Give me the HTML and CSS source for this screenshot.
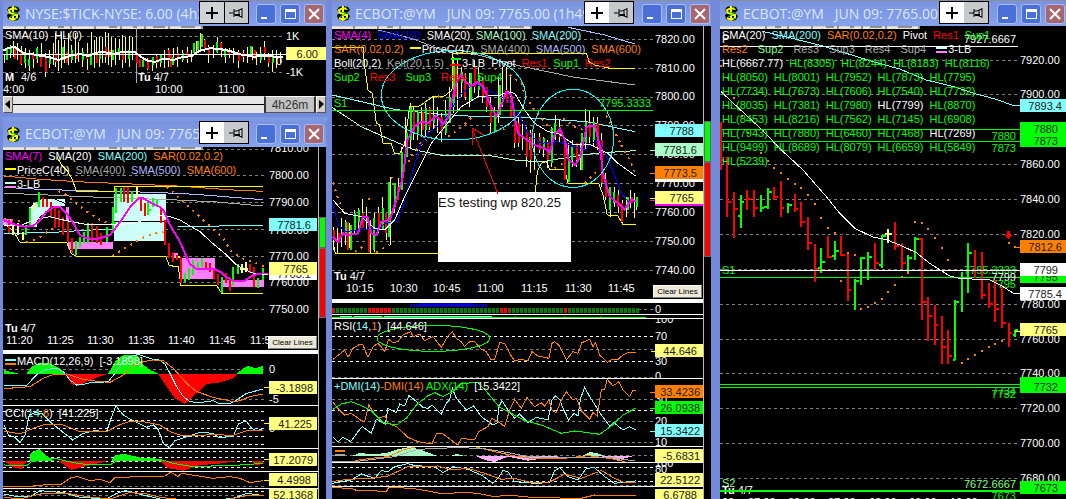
FILE: index.html
```html
<!DOCTYPE html>
<html lang="en">
<head>
    <meta charset="UTF-8">
    <meta name="viewport" content="width=device-width, initial-scale=1.0">
    <title>Trading Workspace</title>
    <link rel="stylesheet" href="styles.css">
</head>
<body>
    <!-- shared icons -->
    <svg class="defs" width="0" height="0">
        <symbol id="logo" viewBox="0 0 15 17">
            <path d="M7 1l5 1 2 3-3 3 3 3-2 4-5 1-5-2-1-4 3-2-3-3 2-3z" fill="#000"/>
            <path d="M11 4L7 3 3 5l1 3 7 2v3l-4 2-4-2M7 1v14" fill="none" stroke="#ff0" stroke-width="2"/>
            <path d="M9 2l3 3M5 7l6 1M4 12l5-3M9 14l3-1" fill="none" stroke="#0c0"/>
        </symbol>
        <symbol id="cross" viewBox="0 0 16 16">
            <path d="M2 8h5M9 8h5M8 2v5M8 9v5M7 8h2" stroke="#000" stroke-width="2"/>
        </symbol>
        <symbol id="pin" viewBox="0 0 16 16">
            <path d="M1 8h5M6 4v8M6 6h3l2-1v6l-2-1H6M14 3v10M11 5l3-1M11 11l3 1" fill="none" stroke="#000"/>
            <path d="M7 9h5v2H7z" fill="#000"/>
        </symbol>
        <symbol id="min" viewBox="0 0 16 16"><path d="M3 11h6v2H3z" fill="#fff"/></symbol>
        <symbol id="max" viewBox="0 0 16 16"><path d="M3 3h11v10H3zM4 6v6h9V6z" fill="#fff" fill-rule="evenodd"/></symbol>
        <symbol id="close" viewBox="0 0 16 16"><path d="M3 3l10 10M13 3L3 13" stroke="#fff" stroke-width="2"/></symbol>
        <symbol id="strip" viewBox="0 0 200 3">
            <path d="M0 0h200v3H0z" fill="#d4d0c8"/>
            <path d="M0 2h200" stroke="#fff"/>
            <path d="M22 0v3M46 0v3M68 0v3M92 0v3M118 0v3M142 0v3M166 0v3M199 0v3M55 1h6M106 1h8M130 1h4M150 1h12M178 1h14" stroke="#444"/>
        </symbol>
    </svg>

    <div class="desktop">
        <div class="column">
            <!-- $TICK -->
            <section class="window tick">
                <header class="titlebar">
                    <svg class="logo"><use href="#logo"/></svg>
                    <h2>NYSE:$TICK-NYSE: 6.00 (4h26m)</h2>
                    <div class="tools">
                        <button type="button" class="pressed" aria-label="Pointer"><svg><use href="#cross"/></svg></button>
                        <button type="button" aria-label="Pin"><svg><use href="#pin"/></svg></button>
                    </div>
                    <button type="button" class="winbtn" aria-label="Minimize"><svg><use href="#min"/></svg></button>
                    <button type="button" class="winbtn" aria-label="Maximize"><svg><use href="#max"/></svg></button>
                    <button type="button" class="winbtn close" aria-label="Close"><svg><use href="#close"/></svg></button>
                </header>
                <div class="chart">
                    <svg viewBox="3 26 323 70">
                        <use href="#strip" x="3" y="26" width="200" height="3"/>
                        <path class="grid" d="M3 36H284M3 72H284"/>
                        <path class="line grey" d="M136 28V83"/>
                        <g class="plot" transform="scale(.3333)">
                            <path class="line pale" d="M15 165V190M22 140V175M31 135V175M40 122V170M52 128V180M64 138V195M76 145V205M88 150V212M100 155V205M112 140V190M124 130V200M136 160V232M148 150V205M160 130V195M168 100V200M176 120V212M184 95V205M194 120V190M206 98V195M216 135V190M226 100V190M236 125V185M248 145V200M262 128V210M274 95V180M284 120V205M290 112V190M298 110V200M308 112V190M318 95V190M327 100V195M336 110V200M348 115V195M358 118V180M368 105V205M378 110V190M388 108V200M397 112V180M412 158V190M430 170V200M444 175V210M458 170V212M470 165V205M482 165V200M494 150V205M506 145V200M520 145V195M534 140V200M548 150V185M562 140V190M576 150V185M590 122V160M602 100V155M614 118V155M626 135V190M640 135V175M652 112V160M664 125V170M676 145V190M688 145V175M700 145V190M716 150V205M730 150V185M744 140V190M758 140V180M770 155V195M782 140V190M794 123V180M806 160V200M818 150V215M830 150V205M842 155V190"/>
                            <path class="bar up" d="M20 145V180M34 138V160M76 160V190M88 178V198M112 145V178M150 168V192M188 140V180M216 150V180M248 155V180M274 160V195M300 155V178M340 150V180M358 145V162M388 150V178M430 180V202M458 172V195M482 166V188M520 172V195M548 158V180M582 130V160M594 122V150M606 102V140M652 126V155M676 150V172M752 138V170M782 158V180M818 165V190"/>
                            <path class="bar down" d="M46 145V178M64 152V192M100 165V178M124 165V202M138 172V215M168 160V185M200 155V190M230 158V176M262 160V178M290 165V188M318 142V172M330 150V170M370 155V180M412 165V188M420 178V202M444 178V206M470 168V190M506 150V182M514 165V202M534 158V172M562 155V178M614 120V150M626 140V165M664 128V150M688 150V165M716 155V182M730 160V172M764 150V176M794 140V160M806 165V188"/>
                            <path class="line white thick" d="M10 152L25 143 45 142 60 152 75 162 95 162 125 168 150 172 175 180 195 173 215 166 240 162 265 168 290 158 310 156 340 162 370 155 405 157 425 172 445 183 465 186 490 176 520 180 545 172 575 168 600 152 630 145 660 147 690 153 720 163 760 170 800 168 850 172"/>
                        </g>
                        <path class="line white" d="M3 54H286"/>
                        <rect class="f-yellow" x="286" y="47" width="40" height="13"/>
                        <text class="tag" x="318" y="58">6.00</text>
                        <text x="286" y="40">1K</text>
                        <text x="286" y="76">-1K</text>
                        <text x="276" y="65">0</text>
                        <text x="5" y="81"><tspan class="strong">M</tspan></text>
                        <text x="21" y="81">4/6</text>
                        <text x="138" y="81"><tspan class="strong">Tu</tspan> 4/7</text>
                        <text x="3" y="93">4:00</text>
                        <text x="61" y="93">15:00</text>
                        <text x="155" y="93">10:00</text>
                        <text x="218" y="93">11:00</text>
                    </svg>
                    <div class="legend">
                        <p><span>SMA(10)</span><span>HL(0)</span></p>
                    </div>
                </div>
                <div class="scrollbar">
                    <button type="button" aria-label="Scroll left"><svg viewBox="0 0 8 15"><path d="M6 3v9L1 7z"/></svg></button>
                    <div class="track"></div>
                    <button type="button" class="thumb">4h26m</button>
                    <button type="button" aria-label="Scroll right"><svg viewBox="0 0 8 15"><path d="M2 3v9l5-5z"/></svg></button>
                </div>
            </section>

            <!-- YM, 1 minute -->
            <section class="window ym1">
                <header class="titlebar">
                    <svg class="logo"><use href="#logo"/></svg>
                    <h2>ECBOT:@YM &nbsp; JUN 09: 7765.00</h2>
                    <div class="tools">
                        <button type="button" class="pressed" aria-label="Pointer"><svg><use href="#cross"/></svg></button>
                        <button type="button" aria-label="Pin"><svg><use href="#pin"/></svg></button>
                    </div>
                    <button type="button" class="winbtn" aria-label="Minimize"><svg><use href="#min"/></svg></button>
                    <button type="button" class="winbtn" aria-label="Maximize"><svg><use href="#max"/></svg></button>
                    <button type="button" class="winbtn close" aria-label="Close"><svg><use href="#close"/></svg></button>
                </header>
                <div class="content">
                    <div class="panels">
                        <div class="chart main">
                            <svg viewBox="3 147 315 203">
                                <path class="grid" d="M3 149H264M3 175H264M3 202H264M3 229H264M3 256H264M3 282H264M3 309H264"/>
                                <text x="269" y="152">7810.00</text>
                                <use href="#strip" x="3" y="147" width="200" height="3"/>
                                <g class="plot" transform="translate(0 120) scale(.3333)">
                                    <path class="f-ice" d="M88 320V262L125 237H195V258H155L110 300V322zM342 222H497V363H342z"/>
                                    <path class="f-pink" d="M10 298H35V315H10zM205 366H338V387H205zM520 399H534V414H520zM543 414H645V477H543zM665 480H792V501H665zM198 262H206V300H198z"/>
                                    <path class="line black" d="M165 238L195 250M342 304H497"/>
                                    <path class="line orange" d="M12 168L120 178 250 186 420 193 530 198 600 203 700 210 788 214"/>
                                    <path class="line lilac" d="M12 202L120 208 250 212 420 216 530 220 600 224 700 232 788 239"/>
                                    <path class="line grey" d="M12 220L100 223 250 230 420 236 530 240 650 246 788 258"/>
                                    <path class="line yellow" d="M170 110L185 135 200 150 215 175 230 214H345V200H788"/>
                                    <path class="line yellow" d="M12 310L40 333 60 367H200L215 402 230 409H497L508 437 535 440 543 496H650L665 520H790"/>
                                    <path class="line cyan" d="M12 340L150 338 250 331 342 328M535 320L788 316"/>
                                    <path class="dots" d="M12 297L70 306M175 213L200 225 250 268 300 300 335 312M80 367L115 355 150 330 168 322M337 408L400 370 440 347 490 335M500 200L550 245 610 300 670 355 690 390 720 412 770 430 792 440"/>
                                    <path class="line pale bold" d="M38 315V345M53 310V345M68 335V360M103 250V270M410 202V245M725 432V458M738 425V455M720 448H745M525 412H540"/>
                                    <path class="bar up" d="M77 315V345M90 265V322M117 215V262M228 362V405M240 350V380M252 335V370M265 310V368M320 320V365M340 262V340M347 205V280M362 205V245M395 212V245M445 245V285M460 235V262M470 240V260M555 460V486M567 445V480M580 420V465M595 425V445M607 415V440M665 470V520M700 440V495M713 432V462M775 475V505M790 445V480M110 250H117M335 310H347M440 270H452"/>
                                    <path class="bar down" d="M28 300V340M130 232V262M142 238V262M152 245V295M165 265V325M178 270V322M190 290V345M203 300V365M215 355V398M277 310V365M290 318V368M302 340V375M372 200V245M385 200V248M422 235V272M435 250V288M484 262V310M495 300V375M508 370V415M520 395V425M530 405V420M543 412V490M618 425V448M630 430V455M643 448V478M655 462V495M678 460V490M690 470V512M750 432V460M762 440V500"/>
                                    <path class="line white" d="M12 315L60 318 100 300 150 290 190 300 250 312 340 315 400 310 450 295 480 285 510 290 540 300 570 318 600 335 640 372 680 405 710 435 740 452 770 463 805 463"/>
                                    <path class="line magenta thick" d="M10 300L30 308 50 315 75 320 100 318 120 300 140 275 160 262 180 262 200 280 220 310 240 345 260 355 290 357 310 352 330 345 350 320 375 285 395 255 415 235 430 235 455 250 475 258 490 270 510 315 540 365 555 400 570 432 590 447 645 448 665 458 680 472 700 482 735 482 760 465 790 460"/>
                                </g>
                                <text x="269" y="179">7800.00</text>
                                <text x="269" y="206">7790.00</text>
                                <text x="269" y="234">7780.00</text>
                                <text x="269" y="260">7770.00</text>
                                <text x="269" y="286">7760.00</text>
                                <text x="269" y="313">7750.00</text>
                                <path class="line magenta" d="M263 273H269"/>
                                <rect class="f-white" x="269" y="267" width="48" height="13"/>
                                <text class="tag" x="311" y="278">7763.1</text>
                                <rect class="f-cyan" x="269" y="218" width="48" height="13"/>
                                <text class="tag" x="311" y="229">7781.6</text>
                                <rect class="f-yellow" x="269" y="262" width="48" height="13"/>
                                <text class="tag" x="308" y="273">7765</text>
                                <text x="5" y="332"><tspan class="strong">Tu</tspan> 4/7</text>
                                <text x="6" y="344">11:20</text>
                                <text x="47" y="344">11:25</text>
                                <text x="87" y="344">11:30</text>
                                <text x="128" y="344">11:35</text>
                                <text x="168" y="344">11:40</text>
                                <text x="209" y="344">11:45</text>
                                <text x="250" y="344">11:50</text>
                            </svg>
                            <div class="legend">
                                <p><span class="magenta">SMA(7)</span><span>SMA(20)</span><span class="cyan">SMA(200)</span><span class="orange">SAR(0.02,0.2)</span></p>
                                <p><span><i class="key k-yellow"></i>PriceC(40)</span><span class="grey">SMA(400)</span><span class="lilac">SMA(500)</span><span class="orange">SMA(600)</span></p>
                                <p><span><i class="key k-lb"></i>3-LB</span></p>
                            </div>
                            <button type="button" class="clear">Clear Lines</button>
                        </div>
                        <div class="chart">
                            <svg viewBox="3 354 315 51">
                                <path class="grid" d="M3 369H264M3 399H264"/>
                                <g class="plot" transform="translate(0 350) scale(.3333)">
                                    <path class="f-up" d="M12 71V60L30 65 55 71zM80 71L95 50 120 38 150 40 180 55 195 71zM325 71L345 35 370 15 410 14 430 45 455 62 475 71zM710 71L730 55 745 48 765 55 790 47V71z"/>
                                    <path class="f-down" d="M195 71L215 102 235 108 260 95 290 83 325 71zM475 71L500 110 525 145 555 162 590 130 620 102 660 97 700 85 715 71z"/>
                                    <path class="line cyan" d="M12 108L80 107 95 90 115 70 140 58 170 55 190 65 210 90 230 105 250 103 270 98 300 97 325 95 345 70 365 40 390 20 415 13 435 20 455 27 475 28 495 42 510 70 530 110 550 140 570 155 600 158 640 152 660 162 690 160 710 150 740 130 790 117"/>
                                    <path class="line orange" d="M12 116L90 110 130 85 160 73 200 72 250 88 300 95 330 97 370 75 400 48 430 35 460 30 490 32 520 55 560 100 590 125 640 142 700 155 720 152 750 140 790 132"/>
                                    <path class="line yellow" d="M792 114H806"/>
                                </g>
                                <text x="269" y="373">0</text>
                                <text x="269" y="403">-5</text>
                                <rect class="f-yellow" x="269" y="381" width="48" height="13"/>
                                <text class="tag" x="313" y="392">-3.1898</text>
                            </svg>
                            <div class="legend tight"><p><span><i class="key k-macd"></i>MACD(12,26,9)</span><span>[-3.1898]</span></p></div>
                        </div>
                        <div class="chart">
                            <svg viewBox="3 406 315 42">
                                <path class="grid g-white" d="M3 411H264M3 420H264M3 428H264M3 436H264M3 444H264"/>
                                <g class="plot" transform="translate(0 350) scale(.3333)">
                                    <path class="line cyan" d="M12 225L25 255 45 262 60 278 75 255 88 195 105 188 125 190 150 215 180 240 200 255 218 270 250 250 285 242 320 245 335 200 348 168 370 195 395 210 440 232 460 225 475 240 490 280 508 293 525 272 560 260 600 247 640 250 655 262 700 260 715 222 738 213 755 235 770 243 790 235"/>
                                    <path class="line orange" d="M12 243L60 252 100 235 130 225 190 225 240 245 320 246 350 228 390 214 430 215 480 225 510 245 550 258 640 254 700 256 740 242 790 240"/>
                                    <path class="line yellow" d="M792 221H806"/>
                                </g>
                                <text x="269" y="432">0</text>
                                <rect class="f-yellow" x="269" y="417" width="48" height="13"/>
                                <text class="tag" x="312" y="428">41.225</text>
                            </svg>
                            <div class="legend tight"><p><span>CCI(<b class="cyan">14</b>,<b class="orange">6</b>)</span><span>[41.225]</span></p></div>
                        </div>
                        <div class="chart">
                            <svg viewBox="3 449 315 22">
                                <path class="grid g-white" d="M3 451H264M3 457H264M3 461H264M3 467H264"/>
                                <g class="plot" transform="translate(0 350) scale(.3333)">
                                    <path class="f-down" d="M12 333H80L65 357 40 352zM175 333L215 360 260 348 325 333zM480 333L505 355 550 362 600 345 650 342 715 333zM755 333L765 345 785 343 790 333z"/>
                                    <path class="f-up" d="M88 333L92 310 118 297 140 318 165 333zM335 333L345 315 375 312 430 325 480 328 490 333z"/>
                                    <path class="line green" d="M12 345L80 347 95 335 165 325 220 338 270 345 330 345 350 333 430 325 480 328 520 340 580 350 720 345 790 340"/>
                                    <path class="line yellow" d="M792 330H806"/>
                                </g>
                                <rect class="f-yellow" x="269" y="453" width="48" height="13"/>
                                <text class="tag" x="313" y="464">17.2079</text>
                            </svg>
                        </div>
                        <div class="chart">
                            <svg viewBox="3 472 315 16">
                                <path class="grid" d="M3 486H264"/>
                                <g class="plot" transform="translate(0 350) scale(.3333)">
                                    <path class="line orange" d="M12 410L80 410 130 405 180 405 215 382 235 380 270 392 300 388 330 398 345 382 440 380 495 378 510 368 520 370 533 380 545 370 640 385 690 380 720 385 750 398 790 392"/>
                                    <path class="line yellow" d="M792 392H806"/>
                                </g>
                                <rect class="f-yellow" x="269" y="473" width="48" height="13"/>
                                <text class="tag" x="311" y="484">4.4998</text>
                            </svg>
                        </div>
                        <div class="chart">
                            <svg viewBox="3 489 315 16">
                                <path class="grid g-white" d="M3 491H264"/>
                                <path class="grid" d="M3 495H264"/>
                                <g class="plot" transform="translate(0 350) scale(.3333)">
                                    <path class="line cyan" d="M12 432L50 440 90 440 120 422 190 428 240 442 320 447 350 430 375 422 430 435 480 447 600 455 700 445 740 430 790 437"/>
                                    <path class="line orange" d="M12 442L60 447 130 430 200 430 260 440 330 447 390 427 440 432 480 442 600 455 690 447 740 437 790 437"/>
                                </g>
                                <rect class="f-yellow" x="269" y="489" width="48" height="13"/>
                                <text class="tag" x="313" y="499">52.1368</text>
                            </svg>
                        </div>
                    </div>
                    <div class="meter"><div class="gain"></div><div class="loss"></div></div>
                </div>
            </section>
        </div>

        <!-- YM, 3 minute -->
        <section class="window ym3">
            <header class="titlebar">
                <svg class="logo"><use href="#logo"/></svg>
                <h2>ECBOT:@YM &nbsp; JUN 09: 7765.00 (1h49m left)</h2>
                <div class="tools">
                    <button type="button" class="pressed" aria-label="Pointer"><svg><use href="#cross"/></svg></button>
                    <button type="button" aria-label="Pin"><svg><use href="#pin"/></svg></button>
                </div>
                <button type="button" class="winbtn" aria-label="Minimize"><svg><use href="#min"/></svg></button>
                <button type="button" class="winbtn" aria-label="Maximize"><svg><use href="#max"/></svg></button>
                <button type="button" class="winbtn close" aria-label="Close"><svg><use href="#close"/></svg></button>
            </header>
            <div class="content">
                <div class="panels">
                    <div class="chart main">
                        <svg viewBox="332 26 371 273">
                            <use href="#strip" x="332" y="26" width="200" height="3"/>
                            <path class="grid" d="M332 39H653M332 68H653M332 97H653M332 125H653M332 154H653M332 183H653M332 212H653M332 241H653M332 270H653"/>
                            <g class="plot" transform="translate(328 0) scale(.3333)">
                                <path class="line grey" d="M150 90L260 118 340 150 450 165 576 198 740 232 921 255"/>
                                <path class="line lilac" d="M721 82L830 105 921 132"/>
                                <path class="line yellow" d="M12 142H105L110 200 120 270 133 280 145 370 155 375 165 430 190 432 200 462H215L230 430 245 320 275 318 300 300 315 290 350 288 372 270 375 160H776L783 185 800 195 846 205H921"/>
                                <path class="line yellow" d="M18 740L22 760H330M622 575L628 515 640 490 655 485 665 508H710L720 550H812L825 585 838 645 870 648 885 673H923"/>
                                <path class="line cyan" d="M12 285L100 305 200 328 300 340 450 350 576 352 776 365 921 395"/>
                                <path class="line mint" d="M12 322L100 380 190 420 260 450 340 466H480L560 480 640 486 720 472 800 460 923 452"/>
                                <path class="dots" d="M15 548L30 595 45 630M80 755L112 735M145 757L185 735M190 530L205 590M120 595L135 605M225 500L245 480 265 450 295 420M275 432L300 400 320 380M330 288L348 302M360 410L390 390 440 345M500 205L515 215M545 225L580 250 590 285 620 330 650 365 670 390M705 355L740 380 765 390M825 328L850 375 880 435M525 390L545 370M680 505L705 490M770 550L815 505M880 435L905 480 923 520"/>
                                <path class="line pale" d="M18 680V750M30 685V760M42 655V740M54 660V735M66 670V745M80 630V700M92 625V690M104 598V660M116 620V690M128 660V760M140 640V755M152 620V700M164 590V690M176 650V720M188 530V735M200 550V640M212 535V600M222 440V560M234 350V470M248 310V445M258 320V420M270 330V420M282 320V410M294 310V410M306 320V390M318 290V390M330 320V400M342 340V425M354 300V405M366 260V370M378 170V340M390 180V330M402 200V290M414 220V300M426 220V320M440 180V280M452 200V290M464 230V310M476 260V335M488 290V400M500 320V395M512 230V370M525 200V320M537 200V300M549 230V350M561 330V445M573 350V440M585 360V450M597 380V500M609 390V520M621 400V510M635 400V460M647 410V470M659 420V505M670 380V500M682 345V420M696 360V430M710 410V540M722 430V520M734 420V500M746 430V500M758 430V510M773 327V450M785 330V430M797 350V440M809 350V450M820 400V560M833 520V600M847 560V650M859 560V620M871 570V640M883 600V670M895 590V650M907 570V625M919 580V655M927 590V630"/>
                                <path class="bar up" d="M54 665V700M68 675V750M80 640V690M92 630V665M138 655V750M164 625V690M182 545V710M200 550V620M222 455V570M238 400V470M248 320V420M270 335V400M294 325V390M318 345V370M354 340V400M366 290V370M378 190V320M402 215V250M428 220V300M452 225V270M500 345V395M515 255V345M605 410V450M647 415V450M672 385V490M682 370V410M722 480V545M732 440V480M762 400V510M773 365V430M797 365V420M847 560V630M859 575V610M899 590V630M927 590V620"/>
                                <path class="bar down" d="M18 690V720M32 700V730M60 665V750M105 640V685M123 690V755M152 640V690M174 640V700M210 560V600M258 330V395M284 335V390M306 325V380M342 350V395M385 200V290M412 240V290M440 200V260M464 240V290M476 260V320M490 320V370M537 270V310M549 290V350M561 350V430M573 370V430M597 390V470M609 400V480M635 410V450M659 430V480M696 380V410M710 430V540M746 430V480M785 370V410M809 370V440M822 420V550M833 540V590M871 585V620M883 610V665M911 590V610"/>
                                <path class="line blue" d="M12 610L30 670 50 695 90 690 150 690 170 670 205 665 225 620 250 530 275 440 300 400 340 370 360 345 400 280 440 250 480 270 540 300 570 340 600 400 640 430 690 425 740 440 770 450 800 425 815 425 850 500 880 580 905 610"/>
                                <path class="line white" d="M15 600L50 640 100 650 140 685 170 690 200 660 230 590 270 510 310 430 350 380 400 320 450 290 520 285 540 275 560 280 590 330 620 370 660 395 690 400 740 435 790 435 840 460 870 490 923 528"/>
                                <path class="line magenta thick" d="M15 710L30 725 45 700 60 705 90 700 105 650 118 650 130 700 145 705 160 665 185 660 205 600 225 530 238 420 260 380 280 365 300 370 325 347 345 372 360 355 370 310 385 250 398 225 412 245 430 258 450 245 468 265 485 310 505 350 520 315 535 275 550 285 560 350 570 400 590 415 620 435 650 445 665 458 681 400 696 388 711 420 722 480 742 495 757 470 776 380 801 378 816 440 825 520 845 590 870 610 890 628 910 600 925 603"/>
                                <path class="line green thick" d="M368 176H398"/>
                                <path class="line red thick" d="M366 194H398"/>
                                <ellipse class="line aqua" cx="376" cy="286" rx="216" ry="134"/>
                                <ellipse class="line aqua" cx="735" cy="415" rx="122" ry="147"/>
                                <path class="line green" d="M12 331H976"/>
                            </g>
                            <rect class="f-white" x="438" y="192" width="133" height="70"/>
                            <text class="note" x="438" y="207">ES testing wp 820.25</text>
                            <path class="line red" d="M498 194L472 128V145M472 128L484 135"/>
                            <text class="green" x="334" y="107">S1</text>
                            <text class="green end" x="651" y="107">7795.3333</text>
                            <text x="655" y="43">7820.00</text>
                            <text x="655" y="72">7810.00</text>
                            <text x="655" y="100">7800.00</text>
                            <text x="655" y="129">7790.00</text>
                            <text x="655" y="158">7780.00</text>
                            <text x="655" y="187">7770.00</text>
                            <text x="655" y="216">7760.00</text>
                            <text x="655" y="245">7750.00</text>
                            <text x="655" y="274">7740.00</text>
                            <path class="line orange" d="M650 173H655"/>
                            <path class="line yellow" d="M650 198H655"/>
                            <path class="line magenta" d="M650 200H655"/>
                            <path class="line mint" d="M650 150H655"/>
                            <rect class="f-cyan" x="655" y="124" width="48" height="13"/>
                            <text class="tag" x="694" y="135">7788</text>
                            <rect class="f-mint" x="655" y="143" width="48" height="13"/>
                            <text class="tag" x="697" y="154">7781.6</text>
                            <rect class="f-orange" x="655" y="166" width="48" height="13"/>
                            <text class="tag" x="697" y="177">7773.5</text>
                            <rect class="f-white" x="655" y="179" width="48" height="3"/>
                            <rect class="f-yellow" x="655" y="191" width="48" height="13"/>
                            <text class="tag" x="694" y="202">7765</text>
                            <rect class="f-magenta" x="655" y="204" width="48" height="2"/>
                            <text x="334" y="280"><tspan class="strong">Tu</tspan> 4/7</text>
                            <text x="346" y="292">10:15</text>
                            <text x="390" y="292">10:30</text>
                            <text x="433" y="292">10:45</text>
                            <text x="477" y="292">11:00</text>
                            <text x="521" y="292">11:15</text>
                            <text x="565" y="292">11:30</text>
                            <text x="608" y="292">11:45</text>
                        </svg>
                        <div class="legend">
                            <p><span class="magenta">SMA(4)</span><span class="blue">SMA(10)</span><span>SMA(20)</span><span class="mint">SMA(100)</span><span class="cyan">SMA(200)</span></p>
                            <p><span class="orange">SAR(0.02,0.2)</span><span><i class="key k-yellow"></i>PriceC(47)</span><span class="grey">SMA(400)</span><span class="lilac">SMA(500)</span><span class="orange">SMA(600)</span></p>
                            <p><span>Boll(20,2)</span><span class="grey">Kelt(20,1.5)</span><span><i class="key"></i>3-LB</span><span>Pivot</span><span class="red">Res1</span><span class="green">Sup1</span><span class="red">Res2</span></p>
                            <p class="wide"><span class="green">Sup2</span><span class="red">Res3</span><span class="green">Sup3</span><span class="red">Res4</span><span class="green">Sup4</span></p>
                        </div>
                        <button type="button" class="clear">Clear Lines</button>
                    </div>
                    <div class="chart">
                        <svg viewBox="332 303 371 11">
                            <path class="grid" d="M638 309H653"/>
                            <path class="beads b-green" d="M332 310H639"/>
                            <path class="beads b-red" d="M332 310h2M368 310h23M500 310h9M564 310h3"/>
                            <path class="ticks" d="M410 305H488"/>
                            <path class="ticks" d="M420 304H474"/>
                            <text x="655" y="313">0</text>
                        </svg>
                    </div>
                    <div class="chart">
                        <svg viewBox="332 315 371 3">
                            <path class="line green" d="M332 317H646"/>
                            <path class="line cyan" d="M340 316H492"/>
                            <path class="line red" d="M352 316h2M382 316h2M514 316h2M564 316h2M600 316h2"/>
                        </svg>
                    </div>
                    <div class="chart">
                        <svg viewBox="332 319 371 59">
                            <path class="grid" d="M332 349H653M332 377H653"/>
                            <path class="grid g-white" d="M332 336H653M332 361H653"/>
                            <g class="plot" transform="translate(328 300) scale(.3333)">
                                <path class="line orange" d="M15 178L32 165 50 150 60 172 75 145 95 133 105 135 120 172 135 140 150 130 160 140 170 155 182 118 195 128 210 125 225 105 248 95 255 110 275 102 290 122 315 110 340 142 360 108 373 95 385 115 400 125 410 140 425 125 440 125 460 148 475 155 490 180 500 178 515 128 530 130 545 160 560 183 575 178 600 182 612 155 630 168 663 175 672 130 680 125 695 138 715 180 735 155 750 160 762 128 785 118 795 140 803 128 815 165 838 187 850 180 870 178 885 165 900 158 923 158"/>
                                <ellipse class="line green" cx="316" cy="115" rx="169" ry="39"/>
                                <path class="line yellow" d="M968 154H980"/>
                            </g>
                            <text x="655" y="323">100</text>
                            <text x="655" y="340">70</text>
                            <text x="655" y="365">30</text>
                            <text x="655" y="380">0</text>
                            <rect class="f-yellow" x="655" y="344" width="48" height="13"/>
                            <text class="tag" x="697" y="355">44.646</text>
                        </svg>
                        <div class="legend tight"><p><span>RSI(<b class="cyan">14</b>,<b class="orange">1</b>)</span><span>[44.646]</span></p></div>
                    </div>
                    <div class="chart">
                        <svg viewBox="332 379 371 67">
                            <path class="grid" d="M332 399H653M332 421H653M332 442H653"/>
                            <path class="grid g-white" d="M332 410H653"/>
                            <g class="plot" transform="translate(328 300) scale(.3333)">
                                <path class="line cyan" d="M15 412L30 425 45 412 68 425 90 395 103 380 130 400 145 358 172 372 180 325 205 338 215 312 230 318 243 287 260 300 285 322 300 325 312 315 340 342 355 310 365 300 373 265 385 295 415 330 437 318 460 350 495 375 507 370 513 320 522 302 540 330 560 355 575 342 600 368 625 352 660 360 672 300 683 287 695 298 705 325 722 360 738 340 750 348 758 295 770 262 785 290 808 325 820 345 845 378 858 368 870 378 885 390 905 380 923 390"/>
                                <path class="line orange" d="M15 307L30 325 50 345 70 340 100 362 110 365 122 315 135 335 150 355 172 348 180 370 205 380 240 412 270 425 312 432 325 402 345 402 390 435 400 415 440 420 452 395 480 380 492 355 515 368 530 380 545 330 560 298 580 325 597 293 620 320 640 308 650 318 663 300 672 330 685 338 700 300 715 275 735 300 745 295 762 335 785 358 795 338 808 348 820 270 830 268 838 238 855 258 873 245 885 270 905 290 915 270 923 273"/>
                                <path class="line green" d="M15 328L40 312 70 305 95 315 130 332 165 368 205 375 235 355 265 315 300 287 320 278 345 290 375 275 400 250 450 248 480 280 515 322 550 340 590 362 640 375 700 400 740 393 780 398 815 403 850 378 885 345 923 325"/>
                            </g>
                            <path class="line orange" d="M650 392H655"/>
                            <path class="line green" d="M650 408H655"/>
                            <path class="line cyan" d="M650 431H655"/>
                            <text x="655" y="403">30</text>
                            <text x="655" y="425">20</text>
                            <text x="655" y="446">10</text>
                            <rect class="f-orange" x="655" y="385" width="48" height="13"/>
                            <text class="tag" x="700" y="396">33.4236</text>
                            <rect class="f-green" x="655" y="401" width="48" height="13"/>
                            <text class="tag" x="700" y="412">26.0938</text>
                            <rect class="f-cyan" x="655" y="424" width="48" height="13"/>
                            <text class="tag" x="700" y="435">15.3422</text>
                        </svg>
                        <div class="legend tight"><p><span><b class="cyan">+DMI(14)</b><b class="orange">-DMI(14)</b> <b class="green">ADX(14)</b></span><span>[15.3422]</span></p></div>
                    </div>
                    <div class="chart">
                        <svg viewBox="332 447 371 15">
                            <path class="grid" d="M332 455H653"/>
                            <g class="plot" transform="translate(328 300) scale(.3333)">
                                <path class="f-mint" d="M75 467L95 459 140 463 180 458 210 448 245 441 275 448 325 467zM370 467L388 462 405 467zM765 467L785 456 810 460 825 467z"/>
                                <path class="f-rose" d="M442 468L470 480 500 486 540 470 600 482 660 474 700 468zM815 468L870 480 920 468z"/>
                                <path class="line orange" d="M80 482L130 475 180 470 225 450 260 441H445L500 455 560 468 610 475 700 476 780 467 850 476 890 485"/>
                                <path class="line grey" d="M12 485H80L200 470 270 448 380 443 460 445 540 458 600 470 700 473 860 474 920 483"/>
                                <path class="line orange thick" d="M20 453H50"/>
                                <path class="line grey thick" d="M20 464H50"/>
                            </g>
                            <rect class="f-yellow" x="655" y="449" width="48" height="13"/>
                            <text class="tag" x="700" y="460">-5.6831</text>
                        </svg>
                    </div>
                    <div class="chart">
                        <svg viewBox="332 463 371 23">
                            <path class="grid" d="M332 474H653M332 485H653"/>
                            <path class="grid g-white" d="M332 467H653M332 481H653"/>
                            <g class="plot" transform="translate(328 300) scale(.3333)">
                                <path class="line cyan" d="M12 550L70 540 100 522 140 535 160 512 180 515 200 500 240 491 260 497 320 500 345 518 375 500 420 508 460 525 495 550 510 535 525 512 540 515 560 545 620 550 665 548 680 512 695 503 720 530 750 540 775 505 800 503 830 530 860 550 923 543"/>
                                <path class="line orange" d="M12 545L60 538 130 535 180 528 240 500 330 498 370 510 420 505 470 520 520 538 560 535 610 548 665 546 710 523 760 535 820 512 860 535 890 548 923 548"/>
                            </g>
                            <text x="655" y="467">100</text>
                            <text x="655" y="473">80</text>
                            <rect class="f-yellow" x="655" y="473" width="48" height="13"/>
                            <text class="tag" x="700" y="484">22.5122</text>
                        </svg>
                    </div>
                    <div class="chart">
                        <svg viewBox="332 487 371 16">
                            <g class="plot" transform="translate(328 300) scale(.3333)">
                                <path class="line orange" d="M12 563L70 565 90 573 130 572 175 575 182 562 250 565 300 573 345 582 400 577 450 580 500 590 540 585 620 593 760 595 800 585 840 588 923 588"/>
                            </g>
                            <rect class="f-yellow" x="655" y="489" width="48" height="13"/>
                            <text class="tag" x="697" y="499">6.6788</text>
                        </svg>
                    </div>
                </div>
                <div class="meter"><div class="gain"></div><div class="loss"></div></div>
            </div>
        </section>

        <!-- YM, hourly -->
        <section class="window ym60">
            <header class="titlebar">
                <svg class="logo"><use href="#logo"/></svg>
                <h2>ECBOT:@YM &nbsp; JUN 09: 7765.00 (</h2>
                <div class="tools">
                    <button type="button" class="pressed" aria-label="Pointer"><svg><use href="#cross"/></svg></button>
                    <button type="button" aria-label="Pin"><svg><use href="#pin"/></svg></button>
                </div>
                <button type="button" class="winbtn" aria-label="Minimize"><svg><use href="#min"/></svg></button>
                <button type="button" class="winbtn" aria-label="Maximize"><svg><use href="#max"/></svg></button>
                <button type="button" class="winbtn close" aria-label="Close"><svg><use href="#close"/></svg></button>
            </header>
            <div class="chart">
                <svg viewBox="720 26 346 484">
                    <use href="#strip" x="720" y="26" width="200" height="3"/>
                    <path class="grid" d="M720 60H1018M720 94H1018M720 164H1018M720 199H1018M720 234H1018M720 269H1018M720 304H1018M720 339H1018M720 373H1018M720 408H1018M720 443H1018M720 478H1018"/>
                    <path class="line white" d="M720 46H1018"/>
                    <path class="line green" d="M720 129H1020M720 141H1020M720 277H1020M720 384H1020M720 387H1020"/>
                    <text x="722" y="43">P</text>
                    <text class="end" x="1016" y="43">7927.6667</text>
                    <text class="green end" x="1016" y="140">7880</text>
                    <text class="green end" x="1016" y="152">7873</text>
                    <text class="green" x="722" y="274">S1</text>
                    <text class="green end" x="1016" y="274">7795.3333</text>
                    <text class="end" x="1016" y="281">7799</text>
                    <text class="green end" x="1016" y="288">7795</text>
                    <text class="green end" x="1016" y="395">7734</text>
                    <text class="green end" x="1016" y="398">7732</text>
                    <text class="sage" x="722" y="487">S2</text>
                    <text class="sage end" x="1016" y="488">7672.6667</text>
                    <text x="722" y="494"><tspan class="strong">Tu</tspan> 4/7</text>
                    <text class="green end" x="1016" y="500">7673</text>
                    <g class="plot" transform="translate(713 0) scale(.3333)">
                        <path class="line cyan" d="M150 95L175 100 250 118 330 138 400 160 480 185 560 207 640 240 730 262 790 282 850 298 905 318H920"/>
                        <path class="bar up" d="M83 585V683M143 585V635M165 565V627M225 610V640M324 745V818M366 722V780M426 838V930M444 770V855M464 755V840M507 705V803M585 765V820M606 712V780M726 900V1080M746 815V935M765 730V880M905 990V1012M75 648H83M83 605H94M143 624H154M154 622H165M165 576H176M225 616H236M314 803H324M324 786H335M356 768H366M366 752H378M426 842H438M444 773H456M464 772H476M497 795H507M507 708H518M585 774H596M606 716H618M720 1080H726M726 905H737M765 759H776M900 1004H905M905 990H914"/>
                        <path class="bar down" d="M24 365V510M43 470V650M62 575V715M103 570V630M122 570V650M183 560V600M203 542V650M245 582V635M263 605V680M285 650V750M305 732V845M345 708V775M384 708V768M404 755V903M486 728V810M546 665V750M567 728V808M627 715V960M645 890V1023M665 915V1035M687 948V1092M705 990V1092M786 750V835M807 755V898M828 850V925M847 840V965M867 855V985M887 968V1040M24 480H34M43 606H55M62 627H74M103 598H114M122 625H134M183 590H194M203 623H214M245 626H256M263 665H275M285 728H296M305 808H316M345 770H356M384 764H395M404 870H415M486 790H497M546 738H557M567 790H578M618 716H627M627 906H638M645 947H656M665 975H676M687 1041H698M705 1068H716M807 884H818M828 912H840M847 927H858M867 970H878M887 1000H898"/>
                        <path class="bar pale" d="M526 688V730M516 702H537"/>
                        <path class="dotlist" d="M22 198h6M43 233h6M60 293h6M83 349h6M102 400h6M142 460h6M162 483h6M180 504h6M202 518h6M222 537h6M242 551h6M261 564h6M282 585h6M303 612h6M321 654h6M342 684h6M363 700h6M381 843h6M402 760h6M423 765h6M441 927h6M462 920h6M483 908h6M504 897h6M523 876h6M543 855h6M564 830h6M582 820h6M603 665h6M624 668h6M642 686h6M663 714h6M684 744h6M702 780h6M723 810h6M744 1088h6M762 1077h6M783 1065h6M804 1053h6M825 1041h6M844 1032h6M864 1022h6M884 729h6M903 740h6"/>
                        <path class="f-down" d="M881 694h10v11h8l-13 13-13-13h8z"/>
                        <path class="line white" d="M24 275L85 332 150 392 200 445 270 510 340 590 380 640 425 685 480 711 520 719 560 735 610 758 650 790 710 828 740 835 830 840 870 860 905 882H920"/>
                    </g>
                    <path class="line white" d="M720 270H1020"/>
                    <path class="line green bold" d="M720 491H1020"/>
                    <path class="line pale" d="M1015 331H1020"/>
                    <path class="line orange" d="M1015 247H1020"/>
                    <text x="1020" y="64">7920.00</text>
                    <text x="1020" y="98">7900.00</text>
                    <text x="1020" y="168">7860.00</text>
                    <text x="1020" y="203">7840.00</text>
                    <text x="1020" y="238">7820.00</text>
                    <text x="1020" y="308">7780.00</text>
                    <text x="1020" y="343">7760.00</text>
                    <text x="1020" y="377">7740.00</text>
                    <text x="1020" y="412">7720.00</text>
                    <text x="1020" y="447">7700.00</text>
                    <text x="1020" y="482">7680.00</text>
                    <rect class="f-cyan" x="1020" y="99" width="46" height="13"/>
                    <text class="tag" x="1062" y="110">7893.4</text>
                    <rect class="f-green" x="1020" y="122" width="46" height="25"/>
                    <text class="tag" x="1058" y="133">7880</text>
                    <text class="tag" x="1058" y="145">7873</text>
                    <rect class="f-orange" x="1020" y="240" width="46" height="13"/>
                    <text class="tag" x="1062" y="251">7812.6</text>
                    <rect class="f-green" x="1020" y="270" width="46" height="13"/>
                    <text class="tag" x="1058" y="281">7795</text>
                    <rect class="f-white" x="1020" y="263" width="46" height="13"/>
                    <text class="tag" x="1058" y="274">7799</text>
                    <rect class="f-white" x="1020" y="287" width="46" height="13"/>
                    <text class="tag" x="1062" y="298">7785.4</text>
                    <rect class="f-yellow" x="1020" y="323" width="46" height="13"/>
                    <text class="tag" x="1058" y="334">7765</text>
                    <rect class="f-green" x="1020" y="377" width="46" height="16"/>
                    <text class="tag" x="1058" y="391">7732</text>
                    <rect class="f-green" x="1020" y="481" width="46" height="13"/>
                    <text class="tag" x="1058" y="492">7673</text>
                    <text x="722" y="506">00</text>
                    <text x="748" y="506">07:00</text>
                    <text x="788" y="506">08:00</text>
                    <text x="828" y="506">07:00</text>
                    <text x="869" y="506">08:00</text>
                    <text x="909" y="506">09:00</text>
                    <text x="950" y="506">10:00</text>
                </svg>
                <div class="legend">
                    <p><span>SMA(20)</span><span class="cyan">SMA(200)</span><span class="orange">SAR(0.02,0.2)</span><span>Pivot</span><span class="red">Res1</span><span class="green">Sup1</span></p>
                    <p class="wide"><span class="orange">Res2</span><span class="sage">Sup2</span><span class="grey">Res3</span><span class="grey">Sup3</span><span class="grey">Res4</span><span class="grey">Sup4</span><span><i class="key k-lb"></i>3-LB</span></p>
                    <p class="green"><span class="white">HL(6667.77)</span><span>HL(8305)</span><span>HL(8244)</span><span>HL(8183)</span><span>HL(8116)</span></p>
                    <p class="green"><span>HL(8050)</span><span>HL(8001)</span><span>HL(7952)</span><span>HL(7873)</span><span>HL(7795)</span></p>
                    <p class="green"><span>HL(7734)</span><span>HL(7673)</span><span>HL(7606)</span><span>HL(7540)</span><span>HL(7732)</span></p>
                    <p class="green"><span>HL(8035)</span><span>HL(7381)</span><span>HL(7980)</span><span class="white">HL(7799)</span><span>HL(8870)</span></p>
                    <p class="green"><span>HL(8453)</span><span>HL(8216)</span><span>HL(7562)</span><span>HL(7145)</span><span>HL(6908)</span></p>
                    <p class="green"><span>HL(7943)</span><span>HL(7880)</span><span>HL(6460)</span><span>HL(7468)</span><span class="white">HL(7269)</span></p>
                    <p class="green"><span>HL(9499)</span><span>HL(8689)</span><span>HL(8079)</span><span>HL(6659)</span><span>HL(5849)</span></p>
                    <p class="green"><span>HL(5239)</span></p>
                </div>
            </div>
        </section>
    </div>
</body>
</html>
```
FILE: styles.css
```css
* {
    box-sizing: border-box;
}

body {
    margin: 0;
    background: #000;
    color: #fff;
    font-family: "Liberation Sans", Arial, sans-serif;
    font-size: 11px;
    overflow: hidden;
}

h2, p {
    margin: 0;
}

button {
    padding: 0;
    font-family: inherit;
    cursor: pointer;
}

.defs {
    position: absolute;
}

.desktop {
    display: grid;
    grid-template-columns: 330fr 384fr 352fr;
    height: 100vh;
    overflow: hidden;
}

.column {
    min-width: 0;
}

/* windows */
.window {
    min-width: 0;
    background: #000;
    border: 0 solid #7389da;
}

.tick {
    border-width: 0 4px 4px 3px;
}

.ym1 {
    border-width: 4px 4px 0 3px;
    border-top-color: #7e99e3;
}

.ym3 {
    border-width: 0 3px 0 2px;
}

.ym60 {
    border-left-width: 6px;
}

.titlebar {
    position: relative;
    display: flex;
    align-items: center;
    gap: 4px;
    height: 26px;
    padding: 0 2px 0 3px;
    border-top: 1px solid #8a8fa0;
    background: linear-gradient(#7b93df, #7f9be6 60%, #86a4ea);
}

.ym1 .titlebar {
    border-top: 0;
}

.ym3 .titlebar,
.ym60 .titlebar {
    padding: 0 1px 0 4px;
}

.titlebar h2 {
    flex: 1;
    min-width: 0;
    overflow: hidden;
    white-space: nowrap;
    font-family: "Open Sans", "Noto Sans", sans-serif;
    font-size: 14px;
    font-weight: 400;
    line-height: 22px;
    color: #dce6fa;
}

.logo {
    width: 15px;
    height: 17px;
    flex: none;
}

.tools {
    position: absolute;
    top: 0;
    right: 77px;
    display: flex;
    width: 50px;
    height: 23px;
    border: 1px solid #000;
}

.tools button {
    flex: 1;
    display: flex;
    align-items: center;
    justify-content: center;
    border: 0;
    background: #c6cacc;
}

.tools .pressed {
    background: #fff;
}

.tick .tools .pressed {
    background: #d0d3d6;
    border-right: 1px solid #000;
}

.tools svg {
    width: 16px;
    height: 16px;
}

.winbtn {
    flex: none;
    display: flex;
    align-items: center;
    justify-content: center;
    width: 20px;
    height: 20px;
    border: 1px solid #a9bdf2;
    border-radius: 3px;
    background: #4a6fd8;
}

.winbtn svg {
    width: 16px;
    height: 16px;
}

.winbtn.close {
    background: #a8666f;
}

.content {
    display: flex;
}

.panels {
    flex: 1;
    min-width: 0;
}

.meter {
    flex: 0 0 8px;
    border-left: 1px solid #bbb;
    padding-top: 70px;
}

.gain,
.loss {
    border: 1px solid #666;
}

.gain {
    height: 31px;
    background: #0f0;
}

.loss {
    height: 70px;
    background: #f00;
}

.ym3 .meter {
    padding-top: 95px;
}

.ym3 .gain {
    height: 41px;
}

.ym3 .loss {
    height: 95px;
}

/* charts */
.chart {
    position: relative;
}

.panels .chart {
    border-bottom: 1px solid #fff;
}

.panels .main {
    border-bottom-width: 4px;
}

.chart > svg {
    display: block;
    width: 100%;
    height: auto;
}

.chart text {
    fill: #fff;
    font-size: 11px;
}

.chart .strong {
    font-weight: bold;
}

.chart .end {
    text-anchor: end;
}

.chart .tag {
    fill: #222;
    text-anchor: end;
}

.chart .note {
    fill: #111;
    font-size: 13px;
}

.chart path,
.chart ellipse {
    vector-effect: non-scaling-stroke;
    shape-rendering: crispEdges;
}

.grid {
    fill: none;
    stroke: #808080;
    stroke-dasharray: 3 3;
}

.g-white {
    stroke: #fff;
}

.line {
    fill: none;
    stroke-width: 1px;
}

.bar,
.bold,
.thick {
    fill: none;
    stroke-width: 2px;
}

.dots {
    fill: none;
    stroke: #ff8000;
    stroke-width: 2px;
    stroke-dasharray: 2 5;
}

.dotlist {
    fill: none;
    stroke: #ff8000;
    stroke-width: 2px;
}

.beads {
    fill: none;
    stroke-width: 5px;
    stroke-dasharray: 3 1;
}

.ticks {
    fill: none;
    stroke: #0000e0;
    stroke-width: 3px;
    stroke-dasharray: 2 1;
}

.b-green { stroke: #008000; }
.b-red { stroke: #f00; }
.up { stroke: #0f0; }
.down { stroke: #f00; }

/* series colours, shared by lines and legend */
.white { color: #fff; stroke: #fff; }
.black { stroke: #000; }
.pale { stroke: #ffff80; }
.yellow { stroke: #ff0; }
.magenta { color: #f0f; stroke: #f0f; }
.cyan { color: #80ffff; stroke: #80ffff; }
.aqua { stroke: #0ff; }
.orange { color: #ff8000; stroke: #ff8000; }
.lilac { color: #b0b8ff; stroke: #b0b8ff; }
.grey { color: #aaa; stroke: #aaa; }
.mint { color: #aaffc8; stroke: #aaffc8; }
.blue { color: #00f; stroke: #00f; }
.green { color: #0f0; stroke: #0f0; }
.red { color: #f00; stroke: #f00; }
.sage { color: #80ff80; }

.chart text.green { fill: #0f0; stroke: none; }
.chart text.sage { fill: #80ff80; }

.f-up, .f-green { fill: #0f0; stroke: none; }
.f-down { fill: #f00; }
.f-white { fill: #fff; }
.f-yellow { fill: #ffff80; }
.f-cyan { fill: #80ffff; }
.f-orange { fill: #ff8000; }
.f-mint { fill: #aaffc8; }
.f-magenta { fill: #f0f; }
.f-ice { fill: #ccfff8; }
.f-pink { fill: #ff80ff; }
.f-rose { fill: #ffb0ff; }

.legend {
    position: absolute;
    top: 2px;
    left: 2px;
    line-height: 14px;
    white-space: nowrap;
}

.legend.tight {
    top: 0;
}

.legend p {
    display: flex;
    gap: 6px;
}

.legend .wide {
    gap: 10px;
}

.legend b {
    font-weight: normal;
}

.key {
    display: inline-block;
    width: 11px;
    height: 6px;
    margin-right: 1px;
}

.k-yellow { border-top: 2px solid #ff0; }
.k-lb { border-top: 2px solid #ccfff8; border-bottom: 2px solid #ff80ff; }
.k-macd { border-top: 2px solid #80ffff; border-bottom: 2px solid #ff8000; }

.clear {
    position: absolute;
    right: 1px;
    bottom: 1px;
    width: 49px;
    height: 13px;
    border: 1px solid #fff;
    border-right-color: #808080;
    border-bottom-color: #808080;
    background: #ece9d8;
    color: #000;
    font-size: 8px;
    line-height: 11px;
}

/* time scrollbar */
.scrollbar {
    display: flex;
    height: 17px;
    background: #e6e6e6;
}

.scrollbar button {
    width: 10px;
    border: 1px solid #fff;
    border-right-color: #555;
    border-bottom-color: #555;
    background: #d4d0c8;
    color: #000;
}

.scrollbar svg {
    display: block;
    width: 8px;
    height: 15px;
}

.scrollbar .track {
    flex: 1;
    height: 9px;
    border-bottom: 1px solid #000;
}

.scrollbar .thumb {
    width: 52px;
    border-left: 2px solid #333;
    border-right: 2px solid #333;
    background: #c4c4c4;
    font-size: 12px;
    line-height: 14px;
    color: #333;
}
```
